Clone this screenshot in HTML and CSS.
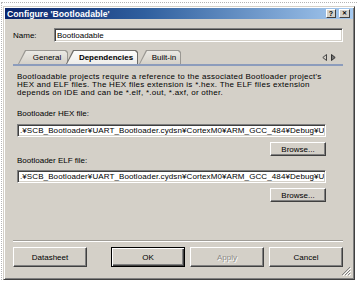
FILE: index.html
```html
<!DOCTYPE html>
<html lang="en">
<head>
    <meta charset="UTF-8">
    <title>Configure 'Bootloadable'</title>
    <link rel="stylesheet" href="styles.css">
</head>
<body>
    <div class="desk">
        <div class="window">
            <div class="titlebar">
                <span class="title">Configure 'Bootloadable'</span>
                <div class="caption-buttons">
                    <span class="cap-btn">?</span>
                    <span class="cap-btn close">&#x2715;</span>
                </div>
            </div>

            <div class="content">
                <div class="name-row">
                    <label>Name:</label>
                    <div class="field">Bootloadable</div>
                </div>

                <div class="tabstrip">
                    <div class="tab"><span>General</span></div>
                    <div class="tab active"><span>Dependencies</span></div>
                    <div class="tab"><span>Built-in</span></div>
                    <div class="tab-arrows">
                        <svg width="5" height="7" viewBox="0 0 5 7"><path d="M4.5 0.5 L0.8 3.5 L4.5 6.5 Z" fill="none" stroke="#444" stroke-width="1"/></svg>
                        <svg width="5" height="7" viewBox="0 0 5 7"><path d="M0.5 0.5 L4.2 3.5 L0.5 6.5 Z" fill="#777" stroke="#333" stroke-width="1"/></svg>
                    </div>
                </div>

                <div class="panel">
                    <p class="desc">Bootloadable projects require a reference to the associated Bootloader project's<br>HEX and ELF files. The HEX files extension is *.hex. The ELF files extension<br>depends on IDE and can be *.elf, *.out, *.axf, or other.</p>

                    <div class="file-label hex">Bootloader HEX file:</div>
                    <div class="field path">.¥SCB_Bootloader¥UART_Bootloader.cydsn¥CortexM0¥ARM_GCC_484¥Debug¥U</div>
                    <div class="browse-row"><button class="btn small">Browse...</button></div>

                    <div class="file-label elf">Bootloader ELF file:</div>
                    <div class="field path elf-path">.¥SCB_Bootloader¥UART_Bootloader.cydsn¥CortexM0¥ARM_GCC_484¥Debug¥U</div>
                    <div class="browse-row"><button class="btn small">Browse...</button></div>
                </div>

                <div class="footer">
                    <button class="btn">Datasheet</button>
                    <div class="spacer"></div>
                    <button class="btn default">OK</button>
                    <button class="btn" disabled>Apply</button>
                    <button class="btn">Cancel</button>
                </div>
            </div>

            <svg class="grip" width="10" height="10" viewBox="0 0 10 10">
                <path d="M9 1 L1 9 M9 4 L4 9 M9 7 L7 9" stroke="#808080" stroke-width="1"/>
                <path d="M10 2 L2 10 M10 5 L5 10 M10 8 L8 10" stroke="#fff" stroke-width="1"/>
            </svg>
        </div>
    </div>
</body>
</html>
```

FILE: styles.css
```css
body {
    margin: 0;
    background: #fff;
    font-family: 'Liberation Sans', Arial, sans-serif;
    font-size: 8px;
    color: #000;
    overflow: hidden;
}
.desk {
    margin: 2px 0 0 1px;
    border-top: 1px dotted #b4b4b4;
    border-left: 1px dotted #b4b4b4;
    padding: 3px 0 0 1px;
}
.window {
    position: relative;
    width: 352px;
    height: 274px;
    box-sizing: border-box;
    background: #d4d0c8;
    border: 1px solid;
    border-color: #d4d0c8 #404040 #404040 #d4d0c8;
    box-shadow: inset 1px 1px #fff, inset -1px -1px #808080;
    padding: 1px;
    display: flex;
    flex-direction: column;
}
.titlebar {
    height: 11px;
    background: linear-gradient(to right, #0a246a, #2f5f9e 40%, #a6caf0);
    display: flex;
    align-items: center;
    padding: 0 3px 0 2px;
}
.title {
    color: #fff;
    font-weight: bold;
    font-size: 8.7px;
    flex: 1;
    white-space: nowrap;
}
.caption-buttons {
    display: flex;
    gap: 3px;
}
.cap-btn {
    width: 10px;
    height: 9px;
    box-sizing: border-box;
    background: #d4d0c8;
    border: 1px solid;
    border-color: #fff #404040 #404040 #fff;
    font-size: 7px;
    font-weight: bold;
    line-height: 7px;
    text-align: center;
}
.cap-btn.close {
    width: 11px;
    font-size: 6px;
}
.content {
    flex: 1;
    display: flex;
    flex-direction: column;
    padding: 9px 10px 0 8px;
}
.name-row {
    display: flex;
    align-items: center;
    height: 14px;
}
.name-row label {
    width: 41px;
}
.name-row .field {
    flex: 1;
    height: 14px;
}
.field {
    box-sizing: border-box;
    background: #fff;
    border: 1px solid;
    border-color: #808080 #fff #fff #808080;
    box-shadow: inset 1px 1px #404040, inset -1px -1px #d4d0c8;
    padding: 0 2px;
    white-space: nowrap;
    overflow: hidden;
    display: flex;
    align-items: center;
}
.tabstrip {
    margin-top: 8px;
    height: 14px;
    border-bottom: 2px solid #8c9cbc;
    display: flex;
    align-items: flex-end;
    padding-left: 5px;
}
.tab {
    position: relative;
    height: 14px;
    background: #9a9893;
    clip-path: polygon(0 100%, 7px 0, calc(100% - 2px) 0, 100% 2px, 100% 100%);
    display: flex;
    align-items: center;
    padding-left: 8px;
    box-sizing: border-box;
}
.tab::before {
    content: "";
    position: absolute;
    left: 1px;
    top: 1px;
    right: 1px;
    bottom: 0;
    background: linear-gradient(#ebe9e4, #d4d0c8);
    clip-path: polygon(0 100%, 7px 0, calc(100% - 2px) 0, 100% 2px, 100% 100%);
}
.tab span {
    position: relative;
    flex: 1;
    text-align: center;
}
.tab:nth-child(1) {
    width: 50px;
}
.tab.active {
    width: 72px;
    margin-left: -2px;
    background: #6f6d69;
    font-weight: bold;
    z-index: 1;
}
.tab.active::before {
    background: linear-gradient(#fdfdfc, #eeede9);
}
.tab:nth-child(3) {
    width: 42px;
    margin-left: 1px;
}
.tab-arrows {
    margin-left: auto;
    margin-right: 7px;
    align-self: center;
    display: flex;
    gap: 4px;
}
.tab-arrows svg {
    display: block;
}
.panel {
    flex: 1;
    padding: 0 17px 0 4px;
}
.desc {
    margin: 7px 0 0;
    line-height: 8px;
    letter-spacing: 0.28px;
    white-space: nowrap;
}
.file-label {
    line-height: 8px;
    margin-top: 13px;
}
.file-label.elf {
    margin-top: 1px;
}
.path {
    height: 13px;
    margin-top: 6px;
    letter-spacing: 0.1px;
}
.elf-path {
    margin-top: 5px;
}
.browse-row {
    display: flex;
    justify-content: flex-end;
    margin-top: 5px;
}
.btn {
    font-family: inherit;
    font-size: 8px;
    color: #000;
    background: #d4d0c8;
    border: 1px solid;
    border-color: #fff #404040 #404040 #fff;
    box-shadow: inset -1px -1px #808080;
    padding: 0;
    width: 74px;
    height: 20px;
    margin: 0;
}
.btn.small {
    width: 56px;
    height: 14px;
}
.btn.default {
    border-color: #000;
    box-shadow: inset 1px 1px #fff, inset -1px -1px #404040, inset -2px -2px #808080;
}
.btn:disabled {
    color: #8c8a85;
    text-shadow: 1px 1px #fff;
}
.footer {
    border-top: 1px solid #a09d97;
    box-shadow: inset 0 1px #fff;
    padding: 6px 0 11px;
    display: flex;
    gap: 5px;
}
.spacer {
    flex: 1;
}
.grip {
    position: absolute;
    right: 3px;
    bottom: 3px;
}
```
